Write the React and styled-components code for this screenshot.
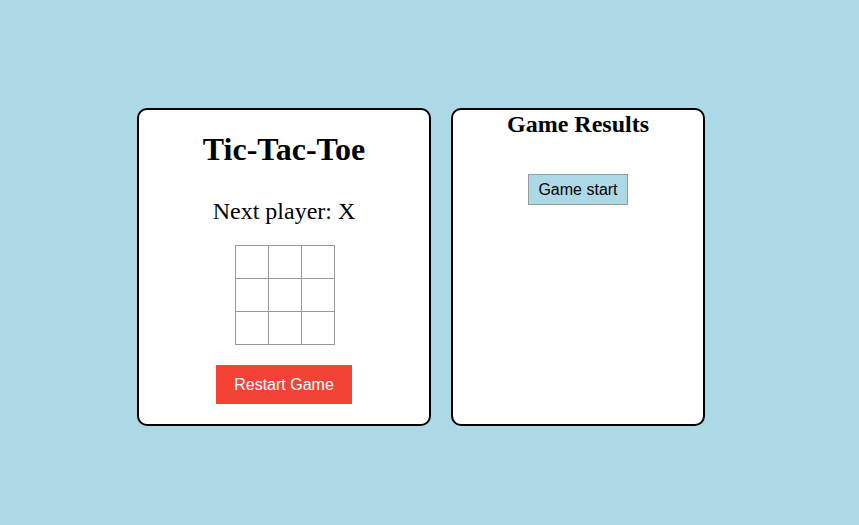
import React, { useState } from 'react';
import styled, { createGlobalStyle } from 'styled-components';

const GlobalStyle = createGlobalStyle`
  html, body {
    margin: 0;
    padding: 0;
    background-color: #add8e6;
  }
  body {
    font-family: 'Liberation Serif', 'Times New Roman', serif;
    color: #000;
  }
`;

const Page = styled.div`
  display: flex;
  align-items: stretch;
  gap: 20px;
  padding: 108px 0 0 137px;
`;

const Card = styled.div`
  box-sizing: border-box;
  width: ${({ $width }) => $width}px;
  background-color: #fff;
  border: 2px solid #000;
  border-radius: 10px;
  display: flex;
  flex-direction: column;
  align-items: center;
  padding: 0 20px 20px;
`;

const Title = styled.h1`
  font-size: 32px;
  font-weight: bold;
  margin: 21px 0 0;
  line-height: 37px;
`;

const Status = styled.div`
  font-size: 24px;
  line-height: 27px;
  margin: 30px 0 20px;
`;

const Board = styled.div`
  display: flex;
  flex-direction: column;
  padding: 1px 0 0 1px;
`;

const BoardRow = styled.div`
  display: flex;
`;

const Square = styled.button`
  box-sizing: border-box;
  width: 34px;
  height: 34px;
  margin: -1px -1px 0 0;
  padding: 0;
  border: 1px solid #999;
  background: #fff;
  font-family: 'Liberation Sans', Arial, sans-serif;
  font-size: 22px;
  font-weight: bold;
  line-height: 32px;
  cursor: pointer;
`;

const Button = styled.button`
  font-family: 'Liberation Sans', Arial, sans-serif;
  font-size: 16px;
  line-height: 19px;
  color: ${({ $danger }) => ($danger ? '#fff' : '#000')};
  background-color: ${({ $danger }) => ($danger ? '#f44336' : '#add8e6')};
  border: ${({ $danger }) => ($danger ? 'none' : '1px solid #999')};
  padding: ${({ $danger }) => ($danger ? '10px 18px' : '5px 9px')};
  margin-top: ${({ $top }) => $top}px;
  cursor: pointer;
`;

const ResultsTitle = styled.h2`
  font-size: 24px;
  font-weight: bold;
  line-height: 28px;
  margin: 0;
`;

export default function App() {
  const [squares, setSquares] = useState(Array(9).fill(null));
  const [xNext, setXNext] = useState(true);

  const handleClick = (i) => {
    if (squares[i]) return;
    const next = squares.slice();
    next[i] = xNext ? 'X' : 'O';
    setSquares(next);
    setXNext(!xNext);
  };

  const restart = () => {
    setSquares(Array(9).fill(null));
    setXNext(true);
  };

  return (
    <>
      <GlobalStyle />
      <Page>
        <Card $width={294}>
          <Title>Tic-Tac-Toe</Title>
          <Status>Next player: {xNext ? 'X' : 'O'}</Status>
          <Board>
            {[0, 1, 2].map((r) => (
              <BoardRow key={r}>
                {[0, 1, 2].map((c) => (
                  <Square key={c} onClick={() => handleClick(r * 3 + c)}>
                    {squares[r * 3 + c]}
                  </Square>
                ))}
              </BoardRow>
            ))}
          </Board>
          <Button $danger $top={20} onClick={restart}>
            Restart Game
          </Button>
        </Card>
        <Card $width={254}>
          <ResultsTitle>Game Results</ResultsTitle>
          <Button $top={36}>Game start</Button>
        </Card>
      </Page>
    </>
  );
}
